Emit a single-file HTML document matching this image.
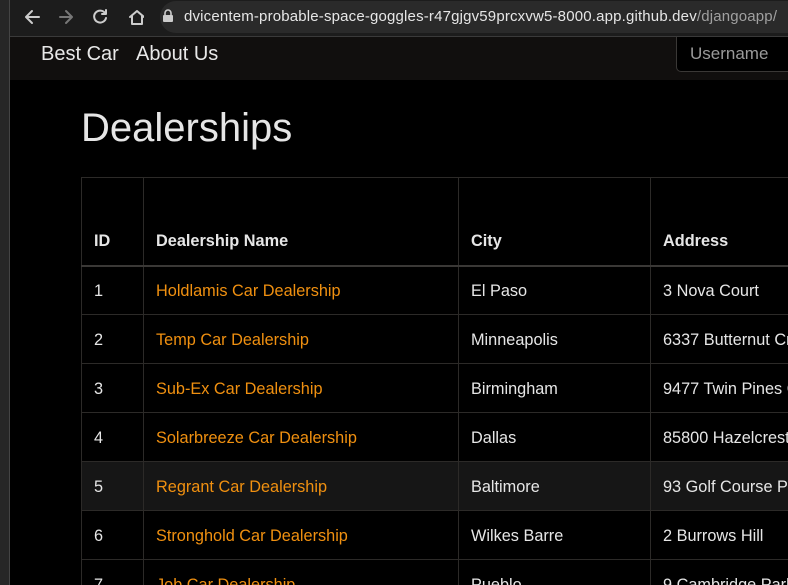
<!DOCTYPE html>
<html style="overflow:hidden;width:788px;height:585px"><head><style>
*{margin:0;padding:0;box-sizing:border-box}
body{width:788px;height:585px;overflow:hidden;background:#000;font-family:"Liberation Sans",sans-serif;position:relative;color:#e6e6e6}
.strip{position:absolute;left:0;top:0;width:10px;height:585px;background:#262626;border-right:1px solid #444}
.tb{position:absolute;left:10px;top:0;right:0;height:37px;background:#1c1c1c;border-bottom:1px solid #3a3a3a}
.pill{position:absolute;left:150px;top:1px;width:700px;height:32px;border-radius:16px;background:#2a2a2a}
.url{position:absolute;left:184px;top:8px;font-size:15px;color:#e6e6e6;white-space:nowrap;letter-spacing:0.17px}
.url span{color:#a0a0a0}
.nav{position:absolute;left:10px;top:37px;right:0;height:43px;background:#110f0e}
.nav a{position:absolute;top:6px;font-size:20px;color:#e8e8e8}
.user{position:absolute;left:676px;top:37px;width:130px;height:35px;border:1px solid #3a3836;border-top:none;border-radius:0 0 0 5px;background:#000;color:#9a9a9a;font-size:17px;padding:7px 0 0 13px}
h1{position:absolute;left:81px;top:106px;font-size:40px;font-weight:normal;color:#e6e6e6}
.wrap{position:absolute;left:81px;top:177px;width:707px;height:408px;overflow:hidden}
table{border-collapse:collapse;table-layout:fixed;width:800px;font-size:16.3px}
td,th{border:1px solid #2c2a28;padding:2px 12px 0;height:49px;text-align:left;white-space:nowrap;overflow:hidden}
th{height:88px;vertical-align:bottom;padding-bottom:14px;font-weight:bold;border-bottom:2px solid #3a3836}
td a{color:#f09010}
tr.h td{background:#161616}
</style></head><body>
<div class="strip"></div>
<div class="tb">
<svg style="position:absolute;left:14px;top:8px" width="120" height="20" viewBox="0 0 120 20" fill="none" stroke-width="2" stroke-linecap="round" stroke-linejoin="round">
<path d="M15 9H3M8 3L2 9l6 6" stroke="#ccc"/>
<path d="M36 9h12M42 3l6 6-6 6" stroke="#777"/>
<path d="M81 5a6 6 0 1 0 1 5M82 2v4h-4" stroke="#ccc"/>
<path d="M106 9l7-6 7 6M108 8v8h10V8" stroke="#ccc"/>
</svg>
<div class="pill"></div>
<svg style="position:absolute;left:152px;top:9px" width="12" height="14" viewBox="0 0 12 14"><rect x="1" y="6" width="10" height="7" rx="1" fill="#ccc"/><path d="M3 6V4a3 3 0 0 1 6 0v2" stroke="#ccc" stroke-width="1.6" fill="none"/></svg>
</div>
<div class="url">dvicentem-probable-space-goggles-r47gjgv59prcxvw5-8000.app.github.dev<span>/djangoapp/</span></div>
<div class="nav"><a style="left:31px">Best Car</a><a style="left:126px">About Us</a></div>
<div class="user">Username</div>
<h1>Dealerships</h1>
<div class="wrap">
<table>
<colgroup><col style="width:62px"><col style="width:315px"><col style="width:192px"><col style="width:231px"></colgroup>
<tr><th>ID</th><th>Dealership Name</th><th>City</th><th>Address</th></tr>
<tr><td>1</td><td><a>Holdlamis Car Dealership</a></td><td>El Paso</td><td>3 Nova Court</td></tr>
<tr><td>2</td><td><a>Temp Car Dealership</a></td><td>Minneapolis</td><td>6337 Butternut Crossing</td></tr>
<tr><td>3</td><td><a>Sub-Ex Car Dealership</a></td><td>Birmingham</td><td>9477 Twin Pines Center</td></tr>
<tr><td>4</td><td><a>Solarbreeze Car Dealership</a></td><td>Dallas</td><td>85800 Hazelcrest Circle</td></tr>
<tr class="h"><td>5</td><td><a>Regrant Car Dealership</a></td><td>Baltimore</td><td>93 Golf Course Pass</td></tr>
<tr><td>6</td><td><a>Stronghold Car Dealership</a></td><td>Wilkes Barre</td><td>2 Burrows Hill</td></tr>
<tr><td>7</td><td><a>Job Car Dealership</a></td><td>Pueblo</td><td>9 Cambridge Park</td></tr>
</table>
</div>
</body></html>
